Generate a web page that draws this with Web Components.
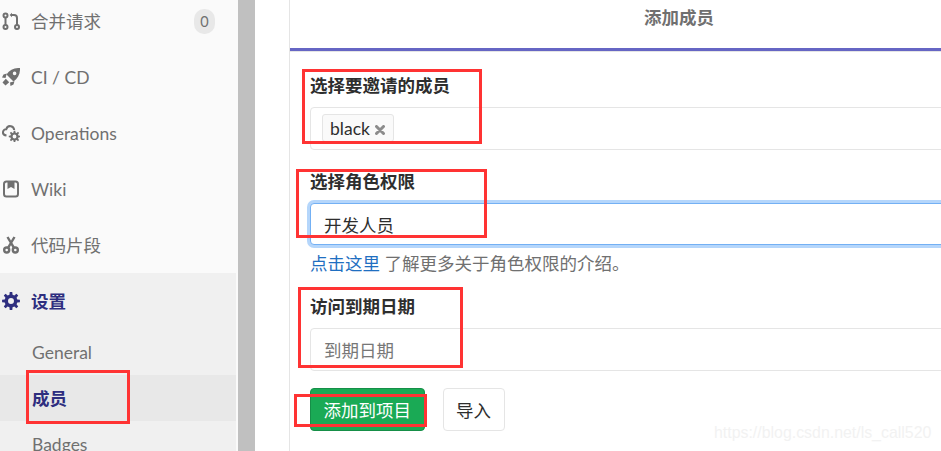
<!DOCTYPE html>
<html lang="zh">
<head>
<meta charset="utf-8">
<title>添加成员</title>
<style>
  html, body { margin: 0; height: 100%; overflow: hidden; background: #fff; }
  body { font: 17.5px/24px Lato, "Noto Sans CJK SC", sans-serif; color: #707070; }
</style>
</head>
<body>
<app-shell>
  <side-nav slot="nav">
    <nav-item badge="0">
      <svg slot="icon" viewBox="0 0 18 18" fill="none" stroke="#707070" stroke-width="2"><circle cx="3.500" cy="3.500" r="2"/><circle cx="3.500" cy="15" r="2"/><circle cx="15" cy="15" r="2"/><path d="M3.500 5.500v7.500M15 13V6q0-3-3-3H9.500"/><path d="M10 .8v4.400L7.600 3z" fill="#707070" stroke="none"/></svg>
      合并请求
    </nav-item>
    <nav-item>
      <svg slot="icon" viewBox="0 0 18 18" fill="#707070"><path fill-rule="evenodd" d="M18 0C12.500-.3 7.500 2 4.500 6.500L11.500 13.500C16 10.500 18.300 5.500 18 0zM12.600 3.600a1.800 1.800 0 1 1 0 3.600 1.800 1.800 0 0 1 0-3.600z"/><path d="M4.800 5.500 1.500 6.500 0 9.500 3.500 10zM12.500 13.200 11.500 16.500 8.500 18 8 14.500zM3.800 10.800l3.400 3.400-3.700 3.300-3-3z"/></svg>
      CI / CD
    </nav-item>
    <nav-item>
      <svg slot="icon" viewBox="0 0 18 18" fill="none" stroke="#707070" stroke-width="2"><path d="M4.500 11.500C1.500 11 .8 9.500 1 8 1.300 6 3 5 4.300 5.200 5 3 7 1.800 9 2.300c2 .5 3 2 3.200 3.700"/><path class="gear" data-cx="12.500" data-cy="12.500" data-r="5.800" fill="#707070" stroke="none" fill-rule="evenodd"/></svg>
      Operations
    </nav-item>
    <nav-item>
      <svg slot="icon" viewBox="0 0 18 18" fill="none" stroke="#707070" stroke-width="2"><rect x="2" y="1.500" width="14" height="15" rx="2.500"/><path d="M5.500 1h7v8L9 7l-3.500 2z" fill="#707070" stroke="none"/></svg>
      Wiki
    </nav-item>
    <nav-item>
      <svg slot="icon" viewBox="0 0 18 18" fill="none" stroke="#707070" stroke-width="2.400"><circle cx="4.700" cy="14" r="2.500"/><circle cx="13.300" cy="14" r="2.500"/><path d="M6 11.800 12.500 1M12 11.800 5.500 1"/></svg>
      代码片段
    </nav-item>
    <nav-section slot="section">
      <nav-item active>
        <svg slot="icon" viewBox="0 0 18 18"><path class="gear" data-cx="9" data-cy="9" data-r="9" fill="#2e2e7f" fill-rule="evenodd"/></svg>
        设置
      </nav-item>
      <sub-item>General</sub-item>
      <sub-item active>成员</sub-item>
      <sub-item>Badges</sub-item>
    </nav-section>
  </side-nav>

  <add-member-panel slot="main"></add-member-panel>

  <red-box slot="marks" style="--x:302px;--y:69px;--w:180px;--h:75px"></red-box>
  <red-box slot="marks" style="--x:296px;--y:169px;--w:191px;--h:69px"></red-box>
  <red-box slot="marks" style="--x:298px;--y:287px;--w:165px;--h:81px"></red-box>
  <red-box slot="marks" style="--x:294px;--y:394px;--w:133px;--h:33px"></red-box>
  <red-box slot="marks" style="--x:26px;--y:370px;--w:104px;--h:54px"></red-box>
  <water-mark slot="marks">https://blog.csdn.net/ls_call520</water-mark>
</app-shell>

<script>
  // gear outline with a hole in the middle, same shape for sidebar icons
  function gearPath(cx, cy, r) {
    const teeth = 8;
    const inner = r * 0.72;
    const hole = r * 0.33;
    let d = '';
    for(let i = 0; i < teeth; i++) {
      const a = (i / teeth) * Math.PI * 2;
      const step = Math.PI / teeth;
      const points = [[inner, a - step * 0.62], [r, a - step * 0.36], [r, a + step * 0.36], [inner, a + step * 0.62]];
      for(const [rad, ang] of points) {
        d += (d ? 'L' : 'M') + (cx + rad * Math.cos(ang)).toFixed(2) + ' ' + (cy + rad * Math.sin(ang)).toFixed(2);
      }
    }
    d += `zM${cx + hole} ${cy}a${hole} ${hole} 0 1 0 ${-2 * hole} 0a${hole} ${hole} 0 1 0 ${2 * hole} 0z`;
    return d;
  }
  document.querySelectorAll('path.gear').forEach(p => {
    p.setAttribute('d', gearPath(+p.dataset.cx, +p.dataset.cy, +p.dataset.r));
  });

  class AppShell extends HTMLElement {
    constructor() {
      super();
      this.attachShadow({ mode: 'open' });
      this.shadowRoot.innerHTML = `
        <style>
          :host { display: flex; position: relative; width: 941px; height: 451px; overflow: hidden; }
          .gutter { flex: 0 0 17px; background: #c0c0c0; }
          .main { flex: 1; min-width: 0; padding-left: 34px; }
        </style>
        <slot name="nav"></slot>
        <div class="gutter"></div>
        <div class="main"><slot name="main"></slot></div>
        <slot name="marks"></slot>
      `;
    }
  }

  class SideNav extends HTMLElement {
    constructor() {
      super();
      this.attachShadow({ mode: 'open' });
      this.shadowRoot.innerHTML = `
        <style>
          :host { display: block; flex: 0 0 238px; height: 451px; overflow: hidden; background: #fafafa; }
          .list { margin-top: -7px; }
        </style>
        <div class="list"><slot></slot><slot name="section"></slot></div>
      `;
    }
  }

  class NavSection extends HTMLElement {
    constructor() {
      super();
      this.attachShadow({ mode: 'open' });
      this.shadowRoot.innerHTML = `
        <style>
          :host { display: block; width: 236px; background: #f0f0f0; }
        </style>
        <slot></slot>
      `;
    }
  }

  class NavItem extends HTMLElement {
    constructor() {
      super();
      this.attachShadow({ mode: 'open' });
      const badge = this.getAttribute('badge');
      this.shadowRoot.innerHTML = `
        <style>
          :host { display: flex; align-items: center; height: 56px; padding-left: 2px; color: #707070; box-sizing: border-box; }
          :host([active]) { color: #2e2e7f; font-weight: 700; }
          .icon { flex: 0 0 18px; height: 18px; margin-right: 11px; }
          ::slotted(svg) { display: block; width: 18px; height: 18px; }
          .label { flex: 1; padding-top: 2px; }
          .badge { width: 21px; height: 25px; margin-right: 23px; border-radius: 10px; background: #e8e8e8; font-size: 14.5px; line-height: 25px; text-align: center; }
        </style>
        <span class="icon"><slot name="icon"></slot></span>
        <span class="label"><slot></slot></span>
        ${badge !== null ? `<span class="badge">${badge}</span>` : ''}
      `;
    }
  }

  class SubItem extends HTMLElement {
    constructor() {
      super();
      this.attachShadow({ mode: 'open' });
      this.shadowRoot.innerHTML = `
        <style>
          :host { display: flex; align-items: center; height: 46px; padding: 2px 0 0 32px; color: #707070; box-sizing: border-box; }
          :host([active]) { background: #e8e8e8; color: #2e2e7f; font-weight: 700; }
        </style>
        <slot></slot>
      `;
    }
  }

  class FormField extends HTMLElement {
    constructor() {
      super();
      this.attachShadow({ mode: 'open' });
      this.shadowRoot.innerHTML = `
        <style>
          :host { display: block; }
          label { display: block; height: 24px; padding-top: 1px; font-weight: 700; color: #2e2e2e; margin-bottom: 9px; }
        </style>
        <label>${this.getAttribute('label')}</label>
        <slot></slot>
      `;
    }
  }

  class TextBox extends HTMLElement {
    constructor() {
      super();
      this.attachShadow({ mode: 'open' });
      this.shadowRoot.innerHTML = `
        <style>
          :host { display: flex; align-items: center; box-sizing: border-box; height: 43px; padding: 3px 0 0 13px; border: 1px solid #e5e5e5; border-radius: 4px; background: #fff; color: #2e2e2e; }
          :host([focused]) { height: 42px; border-color: #73b0f4; box-shadow: 0 0 0 3px #b5d6fb; }
          :host([placeholder]) { color: #777; }
          :host([tokens]) { padding-top: 0; }
        </style>
        <slot></slot>
      `;
    }
  }

  class MemberToken extends HTMLElement {
    constructor() {
      super();
      this.attachShadow({ mode: 'open' });
      this.shadowRoot.innerHTML = `
        <style>
          :host { display: flex; align-items: center; box-sizing: border-box; height: 28px; margin: -2px 0 0 -2px; padding: 2px 8px 0 7px; gap: 5px; border: 1px solid #e5e5e5; border-radius: 3px; background: #fafafa; color: #2e2e2e; }
          svg { width: 10px; height: 10px; margin-top: 2px; }
        </style>
        <slot></slot>
        <svg viewBox="0 0 10 10" stroke="#8c8c8c" stroke-width="3" stroke-linecap="round"><path d="M1.500 1.500l7 7M8.500 1.500l-7 7"/></svg>
      `;
    }
  }

  class AppButton extends HTMLElement {
    constructor() {
      super();
      this.attachShadow({ mode: 'open' });
      this.shadowRoot.innerHTML = `
        <style>
          :host { display: flex; align-items: center; justify-content: center; box-sizing: border-box; height: 43px; padding: 2px 12.500px 0; border: 1px solid #e5e5e5; border-radius: 4px; background: #fff; color: #2e2e2e; }
          :host([primary]) { background: #1aaa55; border-color: #168f48; color: #fff; }
        </style>
        <slot></slot>
      `;
    }
  }

  class AddMemberPanel extends HTMLElement {
    constructor() {
      super();
      this.attachShadow({ mode: 'open' });
      this.shadowRoot.innerHTML = `
        <style>
          :host { display: block; width: 779px; height: 451px; box-sizing: border-box; border-left: 1px solid #e5e5e5; }
          .title { box-sizing: content-box; height: 42px; padding-top: 6px; text-align: center; font-weight: 700; color: #707070; border-bottom: 3px solid #6666c4; }
          .rule { height: 1px; background: #e5e5e5; }
          form { padding: 21px 0 0 20px; }
          .help { margin-top: 7px; height: 24px; }
          .help a { color: #1f6fc1; text-decoration: none; }
          .second { margin-top: 19px; }
          .third { margin-top: 18px; }
          .actions { display: flex; gap: 18px; margin-top: 17px; }
        </style>
        <div class="title">添加成员</div>
        <div class="rule"></div>
        <form>
          <form-field label="选择要邀请的成员">
            <text-box tokens><member-token>black</member-token></text-box>
          </form-field>
          <form-field class="second" label="选择角色权限">
            <text-box focused>开发人员</text-box>
          </form-field>
          <div class="help"><a href="#">点击这里</a> 了解更多关于角色权限的介绍。</div>
          <form-field class="third" label="访问到期日期">
            <text-box placeholder>到期日期</text-box>
          </form-field>
          <div class="actions">
            <app-button primary>添加到项目</app-button>
            <app-button>导入</app-button>
          </div>
        </form>
      `;
    }
  }

  class RedBox extends HTMLElement {
    constructor() {
      super();
      this.attachShadow({ mode: 'open' });
      this.shadowRoot.innerHTML = `
        <style>
          :host { position: absolute; left: var(--x); top: var(--y); width: var(--w); height: var(--h); box-sizing: border-box; border: 3px solid #ff3333; pointer-events: none; }
        </style>
      `;
    }
  }

  class WaterMark extends HTMLElement {
    constructor() {
      super();
      this.attachShadow({ mode: 'open' });
      this.shadowRoot.innerHTML = `
        <style>
          :host { position: absolute; left: 714px; top: 424px; font: 15.900px/18px "Liberation Sans", sans-serif; color: #f2f2f2; white-space: nowrap; }
        </style>
        <slot></slot>
      `;
    }
  }

  customElements.define('app-shell', AppShell);
  customElements.define('side-nav', SideNav);
  customElements.define('nav-section', NavSection);
  customElements.define('nav-item', NavItem);
  customElements.define('sub-item', SubItem);
  customElements.define('form-field', FormField);
  customElements.define('text-box', TextBox);
  customElements.define('member-token', MemberToken);
  customElements.define('app-button', AppButton);
  customElements.define('add-member-panel', AddMemberPanel);
  customElements.define('red-box', RedBox);
  customElements.define('water-mark', WaterMark);
</script>
</body>
</html>
